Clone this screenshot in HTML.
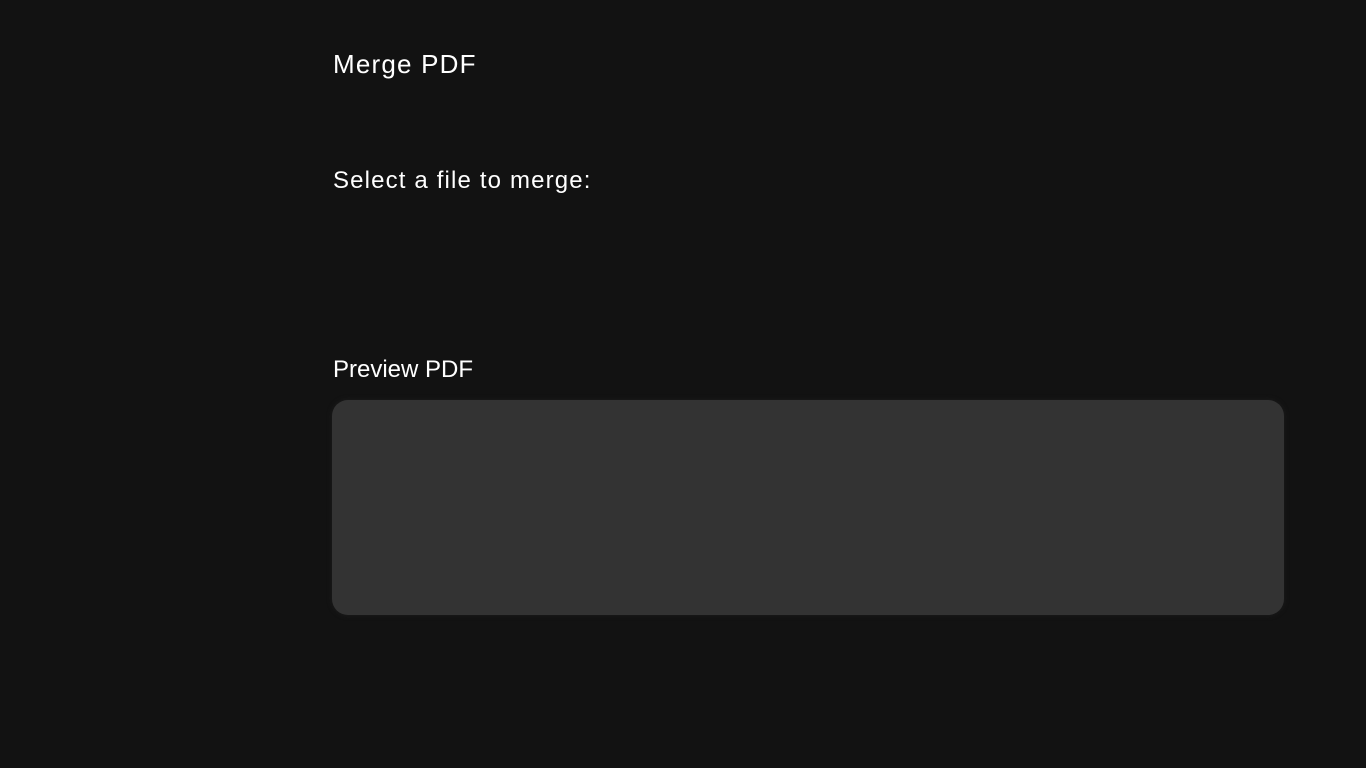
<!DOCTYPE html>
<html><head><meta charset="utf-8"><style>
html,body{margin:0;padding:0;background:#121212;width:1366px;height:768px;overflow:hidden;font-family:"Liberation Sans",sans-serif;color:#fff}
.t{position:absolute;left:333px;white-space:nowrap}
#h{top:49px;font-size:26px;letter-spacing:1.2px}
#s{top:167px;font-size:24px;letter-spacing:1.15px}
#p{top:356px;font-size:24px;letter-spacing:0px}
#box{position:absolute;left:332px;top:400px;width:952px;height:215px;background:#333;border-radius:16px;box-shadow:0 0 4px 1px #1a1a1a}
</style></head><body>
<div class="t" id="h">Merge PDF</div>
<div class="t" id="s">Select a file to merge:</div>
<div class="t" id="p">Preview PDF</div>
<div id="box"></div>
</body></html>
